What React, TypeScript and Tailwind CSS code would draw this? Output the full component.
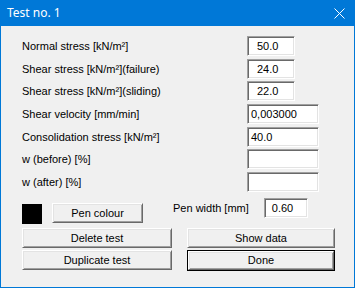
const font = { fontFamily: '"Liberation Sans", Arial, sans-serif' };

const rows = [
  { label: "Normal stress [kN/m²]", value: "50.0", wide: false, gap: "mt-[10px]" },
  { label: "Shear stress [kN/m²](failure)", value: "24.0", wide: false, gap: "mt-[3px]" },
  { label: "Shear stress [kN/m²](sliding)", value: "22.0", wide: false, gap: "mt-[2px]" },
  { label: "Shear velocity [mm/min]", value: "0,003000", wide: true, gap: "mt-[3px]" },
  { label: "Consolidation stress [kN/m²]", value: "40.0", wide: true, gap: "mt-[3px]" },
  { label: "w (before) [%]", value: "", wide: true, gap: "mt-[2px]" },
  { label: "w (after) [%]", value: "", wide: true, gap: "mt-[3px]" },
];

const editCls =
  "h-[20px] bg-white border border-t-[#a0a0a0] border-l-[#a0a0a0] border-b-white border-r-white shadow-[inset_1px_1px_0_#696969,inset_-1px_-1px_0_#e3e3e3] flex items-center text-[11px] text-black leading-none";

function Button({ label, className, isDefault }: { label: string; className: string; isDefault?: boolean }) {
  const face =
    "h-full w-full bg-[#f0f0f0] border border-t-white border-l-white border-b-[#696969] border-r-[#696969] shadow-[inset_1px_1px_0_#e3e3e3,inset_-1px_-1px_0_#a0a0a0] flex items-center justify-center text-[11px] text-black leading-none";
  return (
    <div className={`${className} ${isDefault ? "border border-black" : ""}`}>
      <div className={face}>{label}</div>
    </div>
  );
}

export default function App() {
  return (
    <div className="w-[355px] h-[289px] bg-white" style={font}>
      <div className="w-[355px] h-[288px] bg-[#f0f0f0] border border-[#0078d7] border-t-0 flex flex-col">
        <div className="h-[26px] -mx-px bg-[#0078d7] flex items-center justify-between pl-[7px] pr-[10px]">
          <span className="text-white text-[12px]" style={{ fontFamily: '"Noto Sans", "Open Sans", sans-serif' }}>
            Test no. 1
          </span>
          <svg width="11" height="11" viewBox="0 0 11 11" className="mt-[1px]">
            <path d="M0.5 0.5 L10.5 10.5 M10.5 0.5 L0.5 10.5" stroke="white" strokeWidth="1" />
          </svg>
        </div>

        <div className="flex flex-col pl-[21px]">
          {rows.map((r) => (
            <div key={r.label} className={`${r.gap} h-[20px] flex items-center`}>
              <span className="w-[225px] text-[11px] text-black leading-none">{r.label}</span>
              <div className={`${editCls} ${r.wide ? "w-[72px] pl-[3px]" : "w-[48px] pl-[9px]"}`}>{r.value}</div>
            </div>
          ))}

          <div className="mt-[6px] h-[26px] flex items-start">
            <div className="mt-[6px] w-[20px] h-[20px] bg-black" />
            <Button label="Pen colour" className="mt-[5px] ml-[10px] w-[91px] h-[20px]" />
            <span className="ml-[30px] mt-[5px] text-[11px] text-black leading-none">Pen width [mm]</span>
            <div className={`${editCls} ml-[15px] w-[44px] pl-[7px]`}>0.60</div>
          </div>

          <div className="mt-[4px] flex">
            <Button label="Delete test" className="w-[150px] h-[20px]" />
            <Button label="Show data" className="ml-[15px] w-[148px] h-[20px]" />
          </div>
          <div className="mt-[2px] flex">
            <Button label="Duplicate test" className="w-[150px] h-[20px]" />
            <Button label="Done" className="ml-[15px] w-[148px] h-[21px]" isDefault />
          </div>
        </div>
      </div>
    </div>
  );
}
